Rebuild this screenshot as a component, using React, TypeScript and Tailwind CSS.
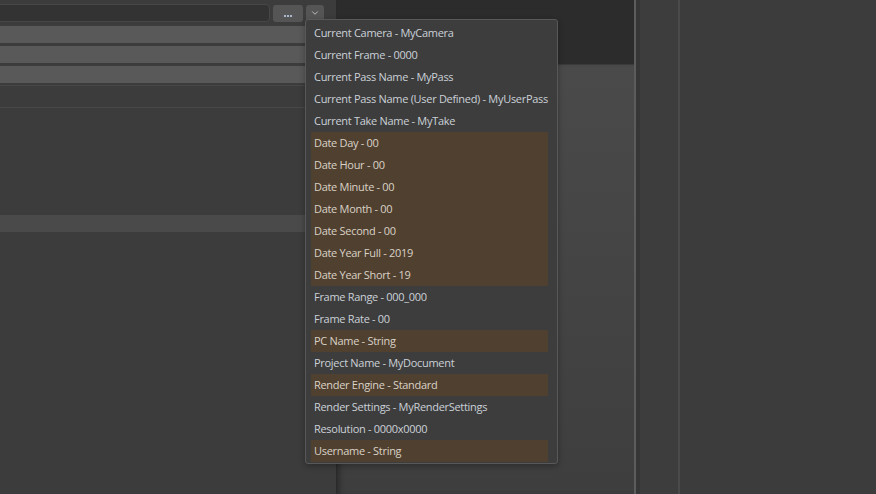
import { ChevronDown } from "lucide-react"

const items: { label: string; hot?: boolean }[] = [
  { label: "Current Camera - MyCamera" },
  { label: "Current Frame - 0000" },
  { label: "Current Pass Name - MyPass" },
  { label: "Current Pass Name (User Defined) - MyUserPass" },
  { label: "Current Take Name - MyTake" },
  { label: "Date Day - 00", hot: true },
  { label: "Date Hour - 00", hot: true },
  { label: "Date Minute - 00", hot: true },
  { label: "Date Month - 00", hot: true },
  { label: "Date Second - 00", hot: true },
  { label: "Date Year Full - 2019", hot: true },
  { label: "Date Year Short - 19", hot: true },
  { label: "Frame Range - 000_000" },
  { label: "Frame Rate - 00" },
  { label: "PC Name - String", hot: true },
  { label: "Project Name - MyDocument" },
  { label: "Render Engine - Standard", hot: true },
  { label: "Render Settings - MyRenderSettings" },
  { label: "Resolution - 0000x0000" },
  { label: "Username - String", hot: true },
]

export default function App() {
  return (
    <div className="relative flex w-[876px] h-[494px] overflow-hidden bg-[#3c3c3c] font-['Open_Sans',sans-serif]">

      {/* left attribute panel */}
      <div className="w-[337px] shrink-0 border-r border-[#2a2a2a] bg-[#3c3c3c]">
        <div className="flex items-center pt-[4px]">
          <div className="w-[278px] h-[18px] -ml-2 rounded-[4px] border border-[#474747] bg-[#333333]" />
          <div className="ml-[3px] w-[30px] h-[17px] rounded-[3px] bg-[#555555] flex items-end justify-center gap-[1px] pb-[5px]">
            <div className="w-[2px] h-[2px] bg-[#aeb8cc]" />
            <div className="w-[2px] h-[2px] bg-[#aeb8cc]" />
            <div className="w-[2px] h-[2px] bg-[#aeb8cc]" />
          </div>
          <div className="ml-[3px] w-[18px] h-[17px] rounded-[3px] bg-[#555555] flex items-center justify-center">
            <ChevronDown size={10} className="text-[#d0d0d0]" strokeWidth={2} />
          </div>
        </div>

        <div className="mt-[4px] flex flex-col gap-[3px]">
          <div className="h-[17px] bg-[#595959]" />
          <div className="h-[17px] bg-[#595959]" />
          <div className="h-[17px] bg-[#595959]" />
        </div>
        <div className="mt-[2px] h-[22px] border-t border-[#474747]" />
        <div className="h-[108px] border-t border-[#474747]" />
        <div className="h-[17px] bg-[#4a4a4a]" />
      </div>

      {/* viewport-ish middle */}
      <div className="w-[297px] shrink-0 flex flex-col">
        <div className="h-[65px] bg-[#2c2c2c] border-b border-[#3a3a3a]" />
        <div className="flex-1 bg-gradient-to-b from-[#4a4a4a] to-[#3e3e3e] shadow-[inset_6px_0_6px_-4px_rgba(0,0,0,0.35)]" />
      </div>

      {/* right side */}
      <div className="w-[2px] bg-[#5c5c5c]" />
      <div className="w-[4px] bg-[#363636]" />
      <div className="w-[40px] bg-[#3d3d3d] border-r-2 border-[#4a4a4a]" />
      <div className="flex-1 bg-[#3c3c3c]" />

      {/* dropdown popup */}
      <div className="absolute left-[305px] top-[19px] w-[253px] pt-[2px] pb-[1px] pl-[5px] pr-[9px] rounded-[3px] border border-[#585858] bg-[#3d3d3d] shadow-[0_2px_6px_rgba(0,0,0,0.3)]">
        {items.map((it) => (
          <div
            key={it.label}
            className={
              it.hot
                ? "h-[22px] flex items-center pl-[3px] text-[11px] tracking-[-0.3px] whitespace-nowrap bg-[#504030] text-[#d9d2c6]"
                : "h-[22px] flex items-center pl-[3px] text-[11px] tracking-[-0.3px] whitespace-nowrap text-[#cbd1d8]"
            }
          >
            {it.label}
          </div>
        ))}
      </div>
    </div>
  )
}
